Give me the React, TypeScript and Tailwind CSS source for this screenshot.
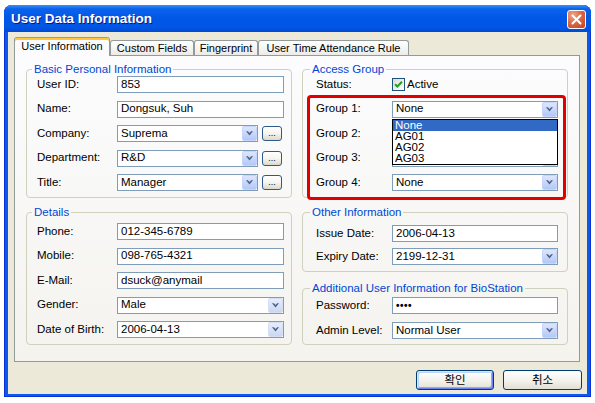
import React from "react";

function ArrowBox({ pale }: { pale?: boolean }) {
	return (
		<span
			className={`flex h-[15px] w-[15px] shrink-0 items-center justify-center rounded-[2px] border ${
				pale
					? "border-[#d6def3] bg-gradient-to-b from-[#e6ecfb] to-[#cbd7f3]"
					: "border-[#c6d5fb] bg-gradient-to-b from-[#dce6fe] to-[#b4c8f7]"
			}`}
		>
			<svg width="7" height="5" viewBox="0 0 7 5">
				<path d="M0 0.3h1.9l1.6 1.8 1.6-1.8H7L3.5 4.4z" fill="#4d6185" />
			</svg>
		</span>
	);
}

function TextBox({ value, className = "" }: { value: string; className?: string }) {
	return (
		<div
			className={`flex h-[17px] flex-1 items-center border border-[#7f9db9] bg-white px-[3px] leading-none ${className}`}
		>
			{value}
		</div>
	);
}

function Combo({
	value,
	className = "flex-1",
	pale,
}: {
	value: string;
	className?: string;
	pale?: boolean;
}) {
	return (
		<div
			className={`flex h-[17px] items-center border border-[#7f9db9] bg-white pl-[3px] leading-none ${className}`}
		>
			<span className="flex-1">{value}</span>
			<ArrowBox pale={pale} />
		</div>
	);
}

function DotsButton() {
	return (
		<div className="flex h-[15px] w-[20px] shrink-0 items-end justify-center rounded-[3px] border border-[#2d5a8a] bg-gradient-to-b from-white via-[#f5f4ef] to-[#dcd8cb] pb-[2px] text-[9px] leading-none">
			...
		</div>
	);
}

function Row({
	label,
	labelW,
	children,
}: {
	label: string;
	labelW: string;
	children: React.ReactNode;
}) {
	return (
		<div className="flex h-[17px] items-center">
			<span className={`${labelW} shrink-0`}>{label}</span>
			{children}
		</div>
	);
}

function Group({
	title,
	className,
	legendClass,
	children,
}: {
	title: string;
	className: string;
	legendClass: string;
	children: React.ReactNode;
}) {
	return (
		<fieldset className={`rounded-[4px] border border-[#d0d0bf] ${className}`}>
			<legend className={`px-[2px] leading-[14px] text-[#0046d5] ${legendClass}`}>
				{title}
			</legend>
			{children}
		</fieldset>
	);
}

function Tab({ label, width, active }: { label: string; width: string; active?: boolean }) {
	if (active) {
		return (
			<div
				className={`relative z-10 -mb-px flex h-[19px] ${width} items-center justify-center rounded-t-[3px] border border-b-0 border-[#919b9c] border-t-[#e68b2c] bg-[#fcfcfe] pb-[1px] shadow-[inset_0_2px_0_#ffc83c]`}
			>
				{label}
			</div>
		);
	}
	return (
		<div
			className={`flex h-[15px] ${width} items-center justify-center rounded-t-[3px] border border-b-0 border-[#919b9c] bg-gradient-to-b from-white to-[#ecebe6]`}
		>
			{label}
		</div>
	);
}

function DialogButton({ label, width, isDefault }: { label: string; width: string; isDefault?: boolean }) {
	return (
		<div
			className={`flex h-[20px] ${width} items-center justify-center rounded-[3px] border border-[#003c74] bg-gradient-to-b from-white via-[#f4f3ee] to-[#e2dfd3] font-['Noto_Sans_CJK_KR',sans-serif] text-[11.5px] leading-none ${
				isDefault
					? "shadow-[inset_1px_1px_0_#cee7ff,inset_-1px_-1px_0_#6982ee,inset_2px_2px_0_#bcd4f6,inset_-2px_-2px_0_#89ade4]"
					: ""
			}`}
		>
			{label}
		</div>
	);
}

export default function App() {
	return (
		<div className="h-[403px] w-[595px] bg-white pl-[4px] pt-[5px] font-['Liberation_Sans','Noto_Sans_CJK_KR',sans-serif] text-[11.5px] text-black">
			<div className="flex h-[392px] w-[587px] flex-col rounded-t-[8px] bg-[#0a5ae6] shadow-[inset_1px_0_0_#0831d9,inset_-1px_0_0_#0831d9,inset_0_-1px_0_#0831d9]">
				{/* title bar */}
				<div className="flex h-[27px] items-center justify-between rounded-t-[8px] bg-[linear-gradient(to_bottom,#3d8ff6_0%,#0b63ec_14%,#0058e6_45%,#0055e4_85%,#0049d3_100%)] pl-[7px] pr-[5px] pt-[2px]">
					<span className="text-[13.5px] font-bold text-white [text-shadow:1px_1px_0_#0a1883]">
						User Data Information
					</span>
					<div className="flex h-[19px] w-[19px] items-center justify-center rounded-[3px] border border-white bg-[radial-gradient(circle_at_30%_25%,#f0a88c_0%,#dc6a46_45%,#c4401c_100%)]">
						<svg width="11" height="11" viewBox="0 0 11 11">
							<path d="M1.5 1.5l8 8M9.5 1.5l-8 8" stroke="white" strokeWidth="2" strokeLinecap="round" />
						</svg>
					</div>
				</div>

				{/* client area */}
				<div className="mx-[4px] mb-[3px] flex flex-1 flex-col bg-[#ece9d8] pl-[6px] pt-[5px]">
					<div className="flex h-[18px] items-end text-[11px]">
						<Tab label="User Information" width="w-[96px]" active />
						<Tab label="Custom Fields" width="w-[84px]" />
						<Tab label="Fingerprint" width="w-[64px]" />
						<Tab label="User Time Attendance Rule" width="w-[151px]" />
					</div>

					<div className="grid h-[307px] w-[566px] grid-cols-[266px_266px] gap-x-[10px] border border-[#919b9c] bg-gradient-to-b from-[#fcfcfe] to-[#f4f3ee] pl-[11px] pt-[6px]">
						{/* left column */}
						<div className="flex flex-col">
							<Group
								title="Basic Personal Information"
								className="pb-[6px] pl-[10px] pr-[7px]"
								legendClass="-ml-[5px]"
							>
								<div className="flex flex-col gap-[7.5px]">
									<Row label="User ID:" labelW="w-[80px]">
										<TextBox value="853" />
									</Row>
									<Row label="Name:" labelW="w-[80px]">
										<TextBox value="Dongsuk, Suh" />
									</Row>
									<Row label="Company:" labelW="w-[80px]">
										<div className="flex flex-1 items-center gap-[4px]">
											<Combo value="Suprema" className="w-[141px]" />
											<DotsButton />
										</div>
									</Row>
									<Row label="Department:" labelW="w-[80px]">
										<div className="flex flex-1 items-center gap-[4px]">
											<Combo value="R&D" className="w-[141px]" />
											<DotsButton />
										</div>
									</Row>
									<Row label="Title:" labelW="w-[80px]">
										<div className="flex flex-1 items-center gap-[4px]">
											<Combo value="Manager" className="w-[141px]" />
											<DotsButton />
										</div>
									</Row>
								</div>
							</Group>

							<Group
								title="Details"
								className="mt-[7px] pb-[6px] pl-[10px] pr-[7px] pt-[4px]"
								legendClass="-ml-[5px]"
							>
								<div className="flex flex-col gap-[7.5px]">
									<Row label="Phone:" labelW="w-[80px]">
										<TextBox value="012-345-6789" />
									</Row>
									<Row label="Mobile:" labelW="w-[80px]">
										<TextBox value="098-765-4321" />
									</Row>
									<Row label="E-Mail:" labelW="w-[80px]">
										<TextBox value="dsuck@anymail" />
									</Row>
									<Row label="Gender:" labelW="w-[80px]">
										<Combo value="Male" pale />
									</Row>
									<Row label="Date of Birth:" labelW="w-[80px]">
										<Combo value="2006-04-13" pale />
									</Row>
								</div>
							</Group>
						</div>

						{/* right column */}
						<div className="relative flex flex-col">
							<Group title="Access Group" className="pb-[6px] pl-[13px] pr-[9px]" legendClass="-ml-[6px]">
								<div className="flex flex-col gap-[7.5px]">
									<Row label="Status:" labelW="w-[76px]">
										<div className="flex items-center gap-[2px]">
											<span className="flex h-[13px] w-[13px] items-center justify-center border border-[#1c5180] bg-gradient-to-br from-[#dcdcd7] to-white">
												<svg width="9" height="9" viewBox="0 0 9 9">
													<path d="M1 4.2l2.3 2.3L8 1.8" stroke="#21a121" strokeWidth="2" fill="none" />
												</svg>
											</span>
											<span>Active</span>
										</div>
									</Row>
									<Row label="Group 1:" labelW="w-[76px]">
										<div className="relative flex-1">
											<Combo value="None" className="w-full" />
											<div className="absolute left-0 top-[18px] z-20 w-full border border-black bg-white text-[11.5px] leading-[11px]">
												<div className="bg-[#316ac5] px-[2px] text-white">None</div>
												<div className="px-[2px]">AG01</div>
												<div className="px-[2px]">AG02</div>
												<div className="px-[2px]">AG03</div>
											</div>
										</div>
									</Row>
									{/* Group 2 and 3 values sit under the open list */}
									<Row label="Group 2:" labelW="w-[76px]">
										<Combo value="" />
									</Row>
									<Row label="Group 3:" labelW="w-[76px]">
										<Combo value="" />
									</Row>
									<Row label="Group 4:" labelW="w-[76px]">
										<Combo value="None" />
									</Row>
								</div>
							</Group>

							<Group
								title="Other Information"
								className="mt-[7px] pb-[6px] pl-[13px] pr-[9px] pt-[6px]"
								legendClass="-ml-[6px]"
							>
								<div className="flex flex-col gap-[6px]">
									<Row label="Issue Date:" labelW="w-[76px]">
										<TextBox value="2006-04-13" />
									</Row>
									<Row label="Expiry Date:" labelW="w-[76px]">
										<Combo value="2199-12-31" />
									</Row>
								</div>
							</Group>

							<Group
								title="Additional User Information for BioStation"
								className="mt-[9px] pb-[5px] pl-[13px] pr-[9px] pt-[2px]"
								legendClass="-ml-[6px]"
							>
								<div className="flex flex-col gap-[8px]">
									<Row label="Password:" labelW="w-[76px]">
										<TextBox value="••••" className="text-[10px] font-bold tracking-[0.5px]" />
									</Row>
									<Row label="Admin Level:" labelW="w-[76px]">
										<Combo value="Normal User" />
									</Row>
								</div>
							</Group>

							{/* red highlight drawn over the group rows */}
							<div className="pointer-events-none absolute left-[5px] top-[33px] h-[105px] w-[259px] rounded-[4px] border-[3px] border-[#e00000]" />
						</div>
					</div>

					<div className="mt-[8px] flex justify-end gap-[9px] pr-[5px]">
						<DialogButton label="확인" width="w-[78px]" isDefault />
						<DialogButton label="취소" width="w-[79px]" />
					</div>
				</div>
			</div>
		</div>
	);
}
